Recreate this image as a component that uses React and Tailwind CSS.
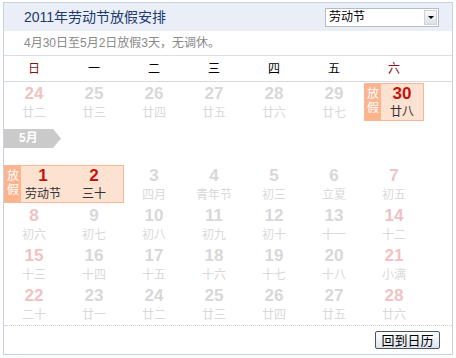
import React from 'react';

const weekdays = ['日', '一', '二', '三', '四', '五', '六'];

const aprilRow = [
  ['24', '廿二'], ['25', '廿三'], ['26', '廿四'], ['27', '廿五'], ['28', '廿六'], ['29', '廿七'],
];

const mayRows = [
  [['8', '初六'], ['9', '初七'], ['10', '初八'], ['11', '初九'], ['12', '初十'], ['13', '十一'], ['14', '十二']],
  [['15', '十三'], ['16', '十四'], ['17', '十五'], ['18', '十六'], ['19', '十七'], ['20', '十八'], ['21', '小满']],
  [['22', '二十'], ['23', '廿一'], ['24', '廿二'], ['25', '廿三'], ['26', '廿四'], ['27', '廿五'], ['28', '廿六']],
];

const Day = ({ num, lunar, weekend }) => (
  <div className="h-[40px] flex flex-col items-center pt-[1px]">
    <span className={`text-[17px] font-bold leading-[20px] ${weekend ? 'text-[#efc3c3]' : 'text-[#d8d8d8]'}`}>{num}</span>
    <span className="text-[12px] leading-[18px] text-[#d9d9d9]">{lunar}</span>
  </div>
);

const HolidayLabel = () => (
  <div className="w-[16px] bg-[#fbb48e] text-white text-[12px] leading-[14px] flex flex-col items-center pt-[3px]">
    <span>放</span>
    <span>假</span>
  </div>
);

const HolidayDay = ({ num, lunar }) => (
  <div className="flex-1 flex flex-col items-center">
    <span className="text-[17px] font-bold leading-[20px] text-[#c4140e]">{num}</span>
    <span className="text-[12px] leading-[16px] text-[#333]">{lunar}</span>
  </div>
);

export default function App() {
  return (
    <div className="pl-[3px] pt-[2px]" style={{ fontFamily: '"Liberation Sans", "Noto Sans CJK SC", sans-serif' }}>
      <div className="w-[450px] h-[353px] border border-[#c8d2e0] bg-white flex flex-col">
        {/* header */}
        <div className="h-[28px] bg-[#e9eef7] flex items-center justify-between pl-[20px] pr-[13px]">
          <span className="text-[14px] text-[#1c3a6b]">2011年劳动节放假安排</span>
          <div className="w-[114px] h-[19px] bg-white border border-[#b4bcc6] flex items-center justify-between pl-[3px] pr-[1px]">
            <span className="text-[12px] leading-none text-black">劳动节</span>
            <div className="w-[13px] h-[15px] bg-gradient-to-b from-[#fafafa] to-[#dde1e6] border border-[#cfd4da] flex items-center justify-center">
              <span className="w-0 h-0 border-l-[3px] border-r-[3px] border-t-[3px] border-l-transparent border-r-transparent border-t-black"></span>
            </div>
          </div>
        </div>
        <div className="h-[25px] flex items-center pl-[20px] border-b border-[#dadfe7]">
          <span className="text-[12px] text-[#8a8a8a]">4月30日至5月2日放假3天，无调休。</span>
        </div>
        {/* weekdays */}
        <div className="h-[26px] grid grid-cols-[repeat(7,60px)] items-center border-b border-[#d6dbe3]">
          {weekdays.map((w, i) => (
            <span key={w} className={`text-center text-[12px] ${i === 0 || i === 6 ? 'text-[#8a1414]' : 'text-black'}`}>{w}</span>
          ))}
        </div>
        {/* April row */}
        <div className="grid grid-cols-[repeat(7,60px)] pt-[1px]">
          {aprilRow.map(([n, l], i) => (
            <Day key={n} num={n} lunar={l} weekend={i === 0} />
          ))}
          <div className="h-[38px] flex border border-[#f2b898] bg-[#fde2d1]">
            <HolidayLabel />
            <HolidayDay num="30" lunar="廿八" />
          </div>
        </div>
        {/* month tag */}
        <div className="h-[42px] pt-[6px]">
          <div className="w-[57px] h-[19px] bg-[#cacaca] text-white font-bold text-[12px] leading-[19px] pl-[15px] [clip-path:polygon(0_0,calc(100%-8px)_0,100%_50%,calc(100%-8px)_100%,0_100%)]">
            5月
          </div>
        </div>
        {/* May rows */}
        <div className="grid grid-cols-[repeat(7,60px)]">
          <div className="col-span-2 h-[38px] mb-[2px] flex border border-[#f2b898] bg-[#fde2d1]">
            <HolidayLabel />
            <div className="flex-1 flex">
              <HolidayDay num="1" lunar="劳动节" />
              <div className="w-[58px] flex flex-col items-center">
                <span className="text-[17px] font-bold leading-[20px] text-[#c4140e]">2</span>
                <span className="text-[12px] leading-[16px] text-[#333]">三十</span>
              </div>
            </div>
          </div>
          <Day num="3" lunar="四月" />
          <Day num="4" lunar="青年节" />
          <Day num="5" lunar="初三" />
          <Day num="6" lunar="立夏" />
          <Day num="7" lunar="初五" weekend />
          {mayRows.map((row) =>
            row.map(([n, l], i) => <Day key={n} num={n} lunar={l} weekend={i === 0 || i === 6} />)
          )}
        </div>
        {/* footer */}
        <div className="mt-auto h-[29px] border-t border-dotted border-[#c8c8c8] flex items-start justify-end pr-[12px] pt-[5px]">
          <button className="w-[65px] h-[18px] border border-[#4a5562] rounded-[2px] bg-gradient-to-b from-white to-[#dfe3ec] text-[13px] leading-none text-black">
            回到日历
          </button>
        </div>
      </div>
    </div>
  );
}
